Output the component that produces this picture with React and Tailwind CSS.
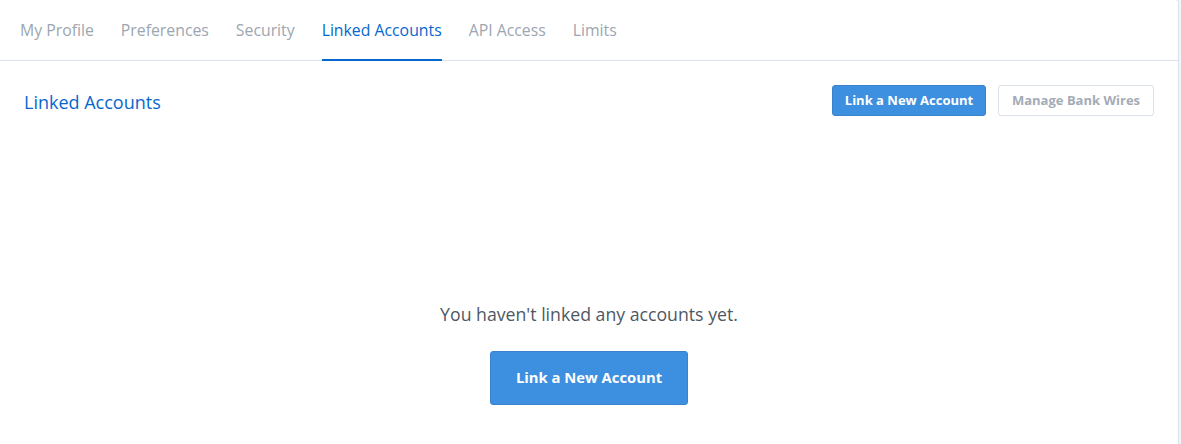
const tabs = ["My Profile", "Preferences", "Security", "Linked Accounts", "API Access", "Limits"];

export default function App() {
  return (
    <div className="w-[1181px] h-[444px] bg-[#f2f5f8] font-['Open_Sans',sans-serif] overflow-hidden">
      <div className="w-[1179px] h-[470px] -mt-[1px] bg-white border border-[#dae1e9] rounded-r-[4px] border-l-0">
        {/* Tabs */}
        <div className="flex h-[61px] pl-5 gap-[27px] border-b border-[#dae1e9]">
          {tabs.map((t) => {
            const active = t === "Linked Accounts";
            return (
              <div
                key={t}
                className={
                  active
                    ? "flex items-center pt-[3px] text-[15.8px] text-[#0667d0] border-b-2 border-[#0667d0] -mb-[1px]"
                    : "flex items-center pt-[1px] text-[15.8px] text-[#9ca6b1]"
                }
              >
                {t}
              </div>
            );
          })}
        </div>

        {/* Header */}
        <div className="flex items-center justify-between pl-6 pr-6 pt-6">
          <h2 className="text-[18px] text-[#0667d0] pt-[3px]">Linked Accounts</h2>
          <div className="flex gap-3">
            <button className="h-[31px] w-[154px] rounded-[3px] bg-[#3d8fdf] border border-[#3a83cc] text-white text-[13px] font-bold">
              Link a New Account
            </button>
            <button className="h-[31px] w-[156px] rounded-[3px] bg-white border border-[#dae1e9] text-[#a3acb6] text-[13px] font-bold">
              Manage Bank Wires
            </button>
          </div>
        </div>

        {/* Empty state */}
        <div className="flex flex-col items-center pt-[185px]">
          <p className="text-[17.7px] text-[#4f5862]">You haven't linked any accounts yet.</p>
          <button className="mt-[23px] h-[54px] w-[198px] rounded-[3px] bg-[#3d8fdf] border border-[#3a83cc] text-white text-[14.8px] font-bold">
            Link a New Account
          </button>
        </div>
      </div>
    </div>
  );
}
